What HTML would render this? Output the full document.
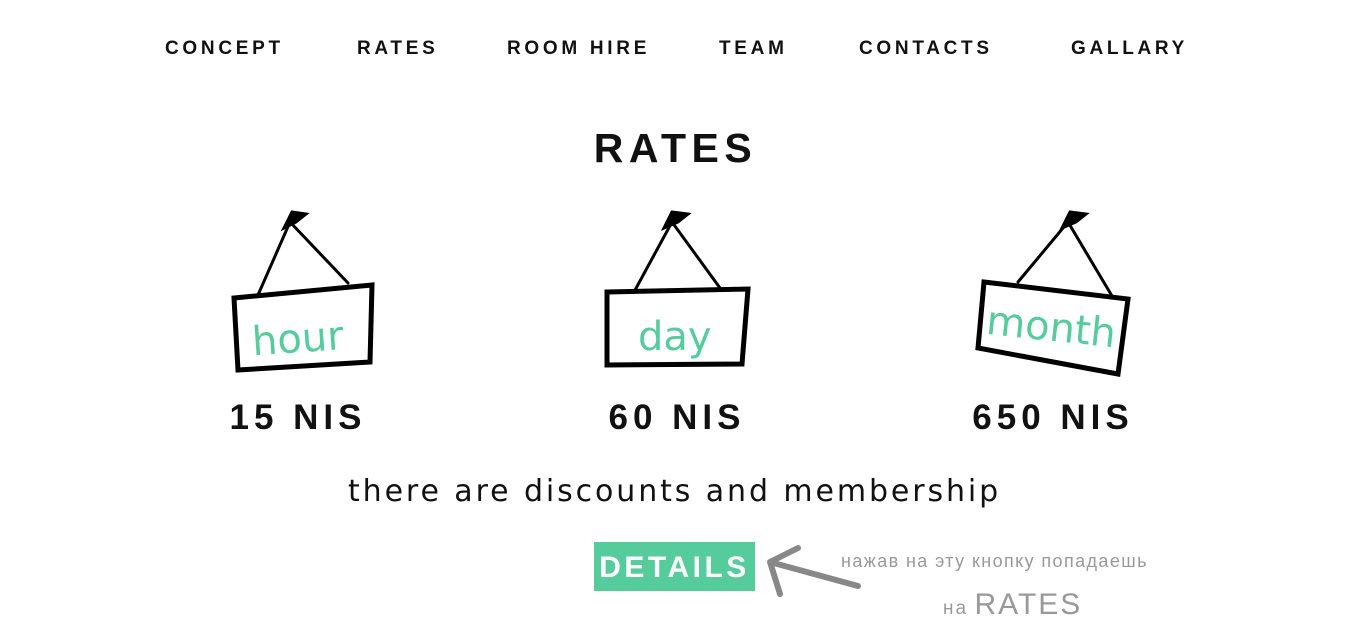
<!DOCTYPE html>
<html><head><meta charset="utf-8"><style>
body{margin:0;width:1351px;height:638px;background:#fff;position:relative;overflow:hidden;font-family:"Liberation Sans",sans-serif;}
.a{position:absolute;white-space:nowrap;}
.nav{top:38px;font-size:19px;font-weight:bold;letter-spacing:3.7px;color:#111;}
.price{top:398px;font-size:35px;font-weight:bold;letter-spacing:5px;color:#111;width:300px;text-align:center;}
</style></head><body>
<div class="a nav" style="left:165px">CONCEPT</div>
<div class="a nav" style="left:357px">RATES</div>
<div class="a nav" style="left:507px">ROOM HIRE</div>
<div class="a nav" style="left:719px">TEAM</div>
<div class="a nav" style="left:859px">CONTACTS</div>
<div class="a nav" style="left:1071px">GALLARY</div>
<div class="a" style="left:0;width:1351px;text-align:center;top:125px;font-size:41px;font-weight:bold;letter-spacing:5.5px;color:#111;">RATES</div>

<svg class="a" style="left:0;top:0" width="1351" height="638">
<g fill="none" stroke="#000" stroke-linecap="round">
<path d="M258 295 L290 222 L348 283" stroke-width="3"/>
<path d="M284 228 L292 212 L306 214 L296 222Z" fill="#000" stroke-width="3"/>
<path d="M234 298 L372 285 L370 362 L238 370Z" stroke-width="5"/>
<path d="M634 292 L672 222 L720 288" stroke-width="3"/>
<path d="M664 228 L672 212 L688 214 L678 222Z" fill="#000" stroke-width="3"/>
<path d="M607 292 L748 289 L742 364 L607 365Z" stroke-width="5"/>
<path d="M1018 282 L1068 222 L1112 296" stroke-width="3"/>
<path d="M1062 228 L1070 212 L1086 214 L1076 222Z" fill="#000" stroke-width="3"/>
<path d="M984 282 L1128 299 L1118 374 L978 348Z" stroke-width="5"/>
<path d="M858 586 L770 562 M770 562 L798 548 M770 562 L780 594" stroke="#888" stroke-width="6"/>
</g>
<g fill="#56cc9d" font-family="DejaVu Sans,sans-serif" font-size="40">
<text x="252" y="352" transform="rotate(-4 300 340)">hour</text>
<text x="638" y="350">day</text>
<text x="986" y="340" transform="rotate(6 1045 330)">month</text>
</g>
</svg>

<div class="a price" style="left:148px">15 NIS</div>
<div class="a price" style="left:527px">60 NIS</div>
<div class="a price" style="left:903px">650 NIS</div>
<div class="a" style="left:348px;top:474px;font-size:30px;letter-spacing:2.9px;color:#111;font-family:'DejaVu Sans',sans-serif;">there are discounts and membership</div>
<div class="a" style="left:594px;top:542px;width:161px;height:49px;background:#56cc9d;color:#fff;font-size:30px;font-weight:bold;letter-spacing:3.5px;text-align:center;line-height:51px;">DETAILS</div>
<div class="a" style="left:841px;top:551px;font-size:18px;letter-spacing:1.4px;color:#999;">нажав на эту кнопку попадаешь</div>
<div class="a" style="left:943px;top:588px;color:#999;letter-spacing:2px;"><span style="font-size:19px">на</span> <span style="font-size:30px;letter-spacing:2px">RATES</span></div>
</body></html>
